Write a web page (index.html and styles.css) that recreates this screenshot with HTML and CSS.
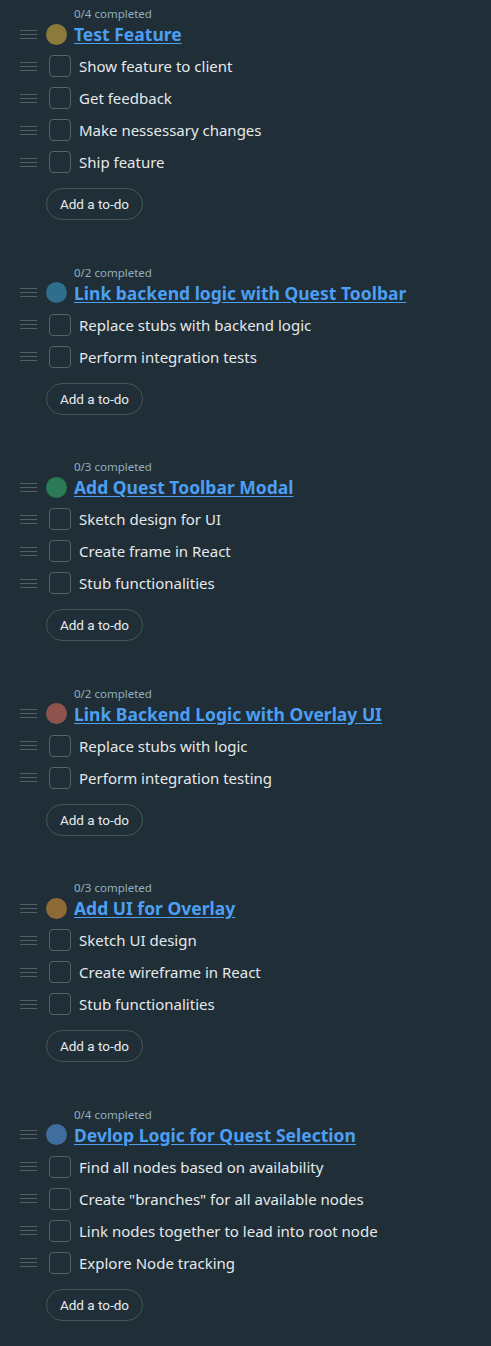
FILE: index.html
```html
<!DOCTYPE html>
<html>
<head>
<meta charset="utf-8">
<link rel="stylesheet" href="styles.css">
</head>
<body>
<div class="list">

<section class="quest">
  <div class="meta">0/4 completed</div>
  <div class="head"><span class="handle"></span><span class="dot c1"></span><a class="title" href="#">Test Feature</a></div>
  <div class="item"><span class="handle"></span><span class="check"></span><span class="text">Show feature to client</span></div>
  <div class="item"><span class="handle"></span><span class="check"></span><span class="text">Get feedback</span></div>
  <div class="item"><span class="handle"></span><span class="check"></span><span class="text">Make nessessary changes</span></div>
  <div class="item"><span class="handle"></span><span class="check"></span><span class="text">Ship feature</span></div>
  <button class="add">Add a to-do</button>
</section>

<section class="quest">
  <div class="meta">0/2 completed</div>
  <div class="head"><span class="handle"></span><span class="dot c2"></span><a class="title" href="#">Link backend logic with Quest Toolbar</a></div>
  <div class="item"><span class="handle"></span><span class="check"></span><span class="text">Replace stubs with backend logic</span></div>
  <div class="item"><span class="handle"></span><span class="check"></span><span class="text">Perform integration tests</span></div>
  <button class="add">Add a to-do</button>
</section>

<section class="quest">
  <div class="meta">0/3 completed</div>
  <div class="head"><span class="handle"></span><span class="dot c3"></span><a class="title" href="#">Add Quest Toolbar Modal</a></div>
  <div class="item"><span class="handle"></span><span class="check"></span><span class="text">Sketch design for UI</span></div>
  <div class="item"><span class="handle"></span><span class="check"></span><span class="text">Create frame in React</span></div>
  <div class="item"><span class="handle"></span><span class="check"></span><span class="text">Stub functionalities</span></div>
  <button class="add">Add a to-do</button>
</section>

<section class="quest">
  <div class="meta">0/2 completed</div>
  <div class="head"><span class="handle"></span><span class="dot c4"></span><a class="title" href="#">Link Backend Logic with Overlay UI</a></div>
  <div class="item"><span class="handle"></span><span class="check"></span><span class="text">Replace stubs with logic</span></div>
  <div class="item"><span class="handle"></span><span class="check"></span><span class="text">Perform integration testing</span></div>
  <button class="add">Add a to-do</button>
</section>

<section class="quest">
  <div class="meta">0/3 completed</div>
  <div class="head"><span class="handle"></span><span class="dot c5"></span><a class="title" href="#">Add UI for Overlay</a></div>
  <div class="item"><span class="handle"></span><span class="check"></span><span class="text">Sketch UI design</span></div>
  <div class="item"><span class="handle"></span><span class="check"></span><span class="text">Create wireframe in React</span></div>
  <div class="item"><span class="handle"></span><span class="check"></span><span class="text">Stub functionalities</span></div>
  <button class="add">Add a to-do</button>
</section>

<section class="quest">
  <div class="meta">0/4 completed</div>
  <div class="head"><span class="handle"></span><span class="dot c6"></span><a class="title" href="#">Devlop Logic for Quest Selection</a></div>
  <div class="item"><span class="handle"></span><span class="check"></span><span class="text">Find all nodes based on availability</span></div>
  <div class="item"><span class="handle"></span><span class="check"></span><span class="text">Create "branches" for all available nodes</span></div>
  <div class="item"><span class="handle"></span><span class="check"></span><span class="text">Link nodes together to lead into root node</span></div>
  <div class="item"><span class="handle"></span><span class="check"></span><span class="text">Explore Node tracking</span></div>
  <button class="add">Add a to-do</button>
</section>

</div>
</body>
</html>
```

FILE: styles.css
```css
html {
  background: #1f2e37;
}
body {
  margin: 0;
  background: #1f2e37;
  font-family: "Noto Sans", "Open Sans", sans-serif;
  color: #e6e9eb;
}
.list {
  display: flex;
  flex-direction: column;
  gap: 44.5px;
  padding: 6px 0 24px 20px;
}
.quest {
  display: flex;
  flex-direction: column;
  align-items: flex-start;
}
.meta {
  margin-left: 54px;
  font-size: 11.5px;
  line-height: 16px;
  height: 16px;
  color: #8fb0bf;
}
.head {
  display: flex;
  align-items: center;
  height: 24px;
  margin-bottom: 4px;
}
.item {
  display: flex;
  align-items: center;
  height: 32px;
}
.handle {
  width: 17px;
  height: 7px;
  border-top: 1px solid #535e65;
  border-bottom: 1px solid #535e65;
  position: relative;
  flex: none;
}
.handle::after {
  content: "";
  position: absolute;
  left: 0;
  right: 0;
  top: 3px;
  border-top: 1px solid #535e65;
}
.dot {
  width: 21px;
  height: 21px;
  border-radius: 50%;
  margin-left: 9px;
  margin-right: 7px;
  flex: none;
}
.c1 { background: #8a7b3c; }
.c2 { background: #2f6e8c; }
.c3 { background: #2c7a55; }
.c4 { background: #8f534e; }
.c5 { background: #8d6a36; }
.c6 { background: #3f6d9e; }
.title {
  font-size: 17.5px;
  font-weight: 700;
  color: #4c9ff2;
  text-decoration: underline;
  text-underline-offset: 2px;
  white-space: nowrap;
}
.check {
  width: 20px;
  height: 20px;
  border: 1px solid #566269;
  border-radius: 4px;
  margin-left: 12px;
  margin-right: 8px;
  flex: none;
}
.text {
  font-size: 15px;
  white-space: nowrap;
}
.add {
  margin-top: 10px;
  margin-left: 26px;
  height: 32px;
  width: 97px;
  padding: 0;
  border: 1px solid #48545b;
  border-radius: 16px;
  background: transparent;
  color: #e8eaec;
  font-family: Roboto, "Liberation Sans", sans-serif;
  font-size: 13.5px;
}
```
